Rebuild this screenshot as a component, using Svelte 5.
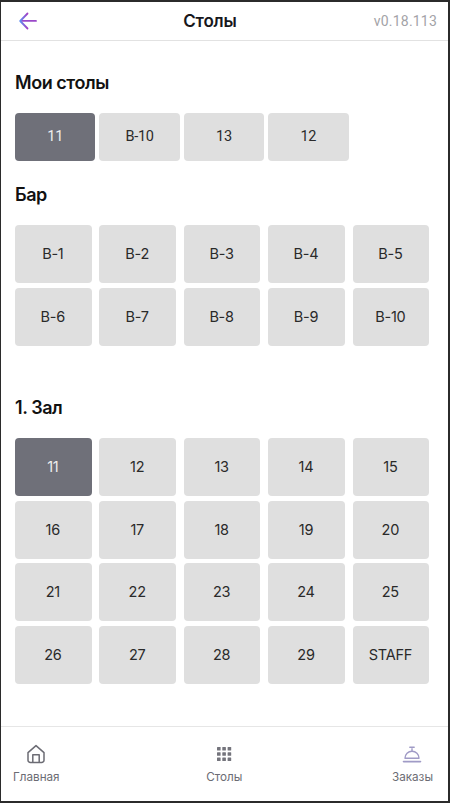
<script>
  const mine = ["11", "B-10", "13", "12"];
  const bar = ["B-1", "B-2", "B-3", "B-4", "B-5", "B-6", "B-7", "B-8", "B-9", "B-10"];
  const hall = [];
  for (let i = 11; i <= 29; i++) hall.push(String(i));
  hall.push("STAFF");
</script>

<div class="frame">
  <header class="top">
    <svg class="back" width="20" height="20" viewBox="0 0 20 20" fill="none">
      <defs>
        <linearGradient id="arrow" x1="0" y1="0" x2="1" y2="0">
          <stop offset="0" stop-color="#5f8df0" />
          <stop offset="1" stop-color="#a23fc4" />
        </linearGradient>
      </defs>
      <path d="M18 9.9H3" stroke="#9a48c8" stroke-width="1.8" stroke-linecap="round" />
      <path d="M9.5 2.5 2.2 10l7.3 7.5" stroke="url(#arrow)" stroke-width="1.8" stroke-linecap="round" stroke-linejoin="round" />
    </svg>
    <h1>Столы</h1>
    <span class="version">v0.18.113</span>
  </header>

  <main>
    <section class="mine">
      <h2>Мои столы</h2>
      <div class="row">
        {#each mine as t, i}
          <button class:active={i === 0}>{t}</button>
        {/each}
      </div>
    </section>

    <section class="bar">
      <h2>Бар</h2>
      <div class="grid">
        {#each bar as t}
          <button>{t}</button>
        {/each}
      </div>
    </section>

    <section class="hall">
      <h2>1. Зал</h2>
      <div class="grid">
        {#each hall as t, i}
          <button class:active={i === 0}>{t}</button>
        {/each}
      </div>
    </section>
  </main>

  <nav>
    <div class="tab home">
      <svg width="20" height="20" viewBox="0 0 20 20" fill="none" stroke="#6c6c74" stroke-width="1.5" stroke-linejoin="round">
        <path d="M2 8.6 10 1.6l8 7v7.6a2.3 2.3 0 0 1-2.3 2.3H4.3A2.3 2.3 0 0 1 2 16.2z" />
        <path d="M6.8 18.4v-7.6h6.4v7.6" />
      </svg>
      <span>Главная</span>
    </div>
    <div class="tab tables">
      <svg width="20" height="20" viewBox="0 0 20 20" fill="#74747c">
        <rect x="3" y="3" width="3.6" height="3.6" rx=".5" /><rect x="8.3" y="3" width="3.6" height="3.6" rx=".5" /><rect x="13.6" y="3" width="3.6" height="3.6" rx=".5" />
        <rect x="3" y="8.2" width="3.6" height="3.6" rx=".5" /><rect x="8.3" y="8.2" width="3.6" height="3.6" rx=".5" /><rect x="13.6" y="8.2" width="3.6" height="3.6" rx=".5" />
        <rect x="3" y="13.4" width="3.6" height="3.6" rx=".5" /><rect x="8.3" y="13.4" width="3.6" height="3.6" rx=".5" /><rect x="13.6" y="13.4" width="3.6" height="3.6" rx=".5" />
      </svg>
      <span>Столы</span>
    </div>
    <div class="tab orders">
      <svg width="20" height="20" viewBox="0 0 20 20" fill="none" stroke="#a09bc6" stroke-width="1.4">
        <path d="M3 14.2a7 7 0 0 1 14 0z" stroke-linejoin="round" />
        <path d="M10 7V4.2" />
        <path d="M7.8 3.2h4.4" stroke-linecap="round" />
        <path d="M1.5 17.6h17" stroke-width="1.6" stroke-linecap="round" />
      </svg>
      <span>Заказы</span>
    </div>
  </nav>
</div>

<style>
  :global(body) {
    margin: 0;
    background: #fff;
  }
  .frame {
    box-sizing: border-box;
    width: 450px;
    height: 803px;
    border: solid #2b2b2b;
    border-width: 2px 2px 2px 1px;
    display: flex;
    flex-direction: column;
    font-family: Inter, "Liberation Sans", sans-serif;
    color: #17171c;
    overflow: hidden;
  }
  .top {
    flex: none;
    height: 38px;
    border-bottom: 1px solid #e2e2e2;
    display: flex;
    align-items: center;
    justify-content: space-between;
    padding: 0 11px 0 17px;
  }
  .back {
    display: block;
  }
  h1 {
    margin: 0 0 0 8px;
    font-size: 17px;
    line-height: 24px;
    font-weight: 600;
    letter-spacing: -0.2px;
  }
  .version {
    font-family: Roboto, sans-serif;
    font-size: 14px;
    color: #a3a3a7;
    letter-spacing: 0.2px;
  }
  main {
    flex: 1;
    padding: 0 14px;
  }
  h2 {
    margin: 0;
    font-size: 18px;
    line-height: 24px;
    font-weight: 600;
    letter-spacing: -0.45px;
    color: #111;
  }
  .mine {
    padding-top: 30px;
  }
  .bar {
    padding-top: 22px;
  }
  .hall {
    padding-top: 50px;
  }
  .row {
    display: flex;
    gap: 4px;
    margin-top: 18px;
  }
  .row button {
    width: 80.4px;
    height: 48px;
    padding-right: 0;
    font-family: Roboto, sans-serif;
  }
  .grid {
    display: grid;
    grid-template-columns: repeat(5, 76.6px);
    grid-auto-rows: 58.2px;
    column-gap: 7.8px;
    row-gap: 4.5px;
    margin-top: 18px;
  }
  button {
    border: 0;
    padding: 0 1px 1px 0;
    border-radius: 4px;
    background: #dfdfdf;
    color: #2a2a2a;
    font-family: Inter, sans-serif;
    font-size: 14.5px;
    letter-spacing: -0.25px;
  }
  button.active {
    background: #6f7079;
    color: #eee;
  }
  nav {
    flex: none;
    height: 75px;
    box-sizing: border-box;
    border-top: 1px solid #e6e6e6;
    display: flex;
    justify-content: space-between;
    padding: 17px 15px 0 12px;
  }
  .tab {
    display: flex;
    flex-direction: column;
    align-items: center;
    gap: 6px;
    font-size: 11.7px;
    color: #6c6c74;
  }
  .tables {
    margin-right: 3px;
  }
  .tab span {
    line-height: 15px;
  }
</style>
